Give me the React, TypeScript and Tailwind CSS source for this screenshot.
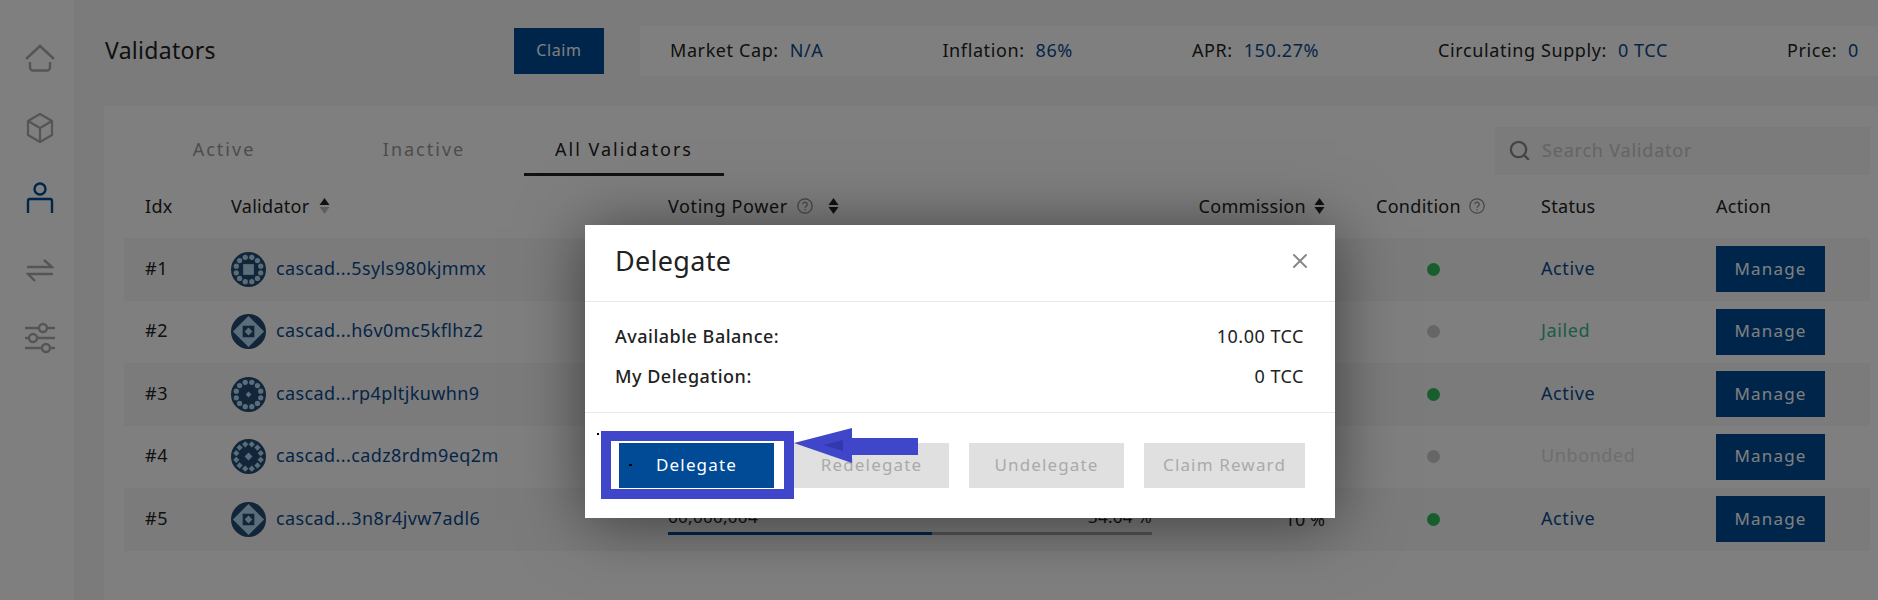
import { Search, X } from 'lucide-react';

// Validators page, with the Delegate modal open over it.

interface Validator {
  idx: number;
  name: string;
  avatar: number;
  status: string;
  statusClass: string;
  online: boolean;
  // only the last row's numbers stick out below the modal
  power?: string;
  share?: string;
  fill?: number;
  commission?: string;
}

const validators: Validator[] = [
  { idx: 1, name: 'cascad...5syls980kjmmx', avatar: 0, online: true, status: 'Active', statusClass: 'text-[#0b4a8f]' },
  { idx: 2, name: 'cascad...h6v0mc5kflhz2', avatar: 1, online: false, status: 'Jailed', statusClass: 'text-[#35b88c]' },
  { idx: 3, name: 'cascad...rp4pltjkuwhn9', avatar: 2, online: true, status: 'Active', statusClass: 'text-[#0b4a8f]' },
  { idx: 4, name: 'cascad...cadz8rdm9eq2m', avatar: 3, online: false, status: 'Unbonded', statusClass: 'text-[#dcdcdc]' },
  { idx: 5, name: 'cascad...3n8r4jvw7adl6', avatar: 1, online: true, status: 'Active', statusClass: 'text-[#0b4a8f]', power: '60,000,004', share: '34.64 %', fill: 54.5, commission: '10 %' },
];

const stats = [
  { label: 'Market Cap:', value: 'N/A' },
  { label: 'Inflation:', value: '86%' },
  { label: 'APR:', value: '150.27%' },
  { label: 'Circulating Supply:', value: '0 TCC' },
  { label: 'Price:', value: '0' },
];

const columns = 'grid grid-cols-[86px_437px_484px_173px_216px_175px_1fr] items-center';

function HomeIcon() {
  return (
    <svg width="32" height="30" viewBox="0 0 32 30" fill="none" stroke="#aaaaaa" strokeWidth="2.4">
      <path d="M2 15 16 2l14 13" />
      <path d="M6 18v5.5a3 3 0 0 0 3 3h14a3 3 0 0 0 3-3V18" />
    </svg>
  );
}

function CubeIcon() {
  return (
    <svg width="28" height="32" viewBox="0 0 28 32" fill="none" stroke="#aaaaaa" strokeWidth="2.2" strokeLinejoin="round">
      <path d="M14 2 26 9v14l-12 7-12-7V9z" />
      <path d="M2 9l12 7 12-7M14 16v14" />
    </svg>
  );
}

function PersonIcon() {
  return (
    <svg width="28" height="32" viewBox="0 0 28 32" fill="none" stroke="#004a96" strokeWidth="2.4">
      <circle cx="14" cy="7" r="5.5" />
      <path d="M2 31V19a2 2 0 0 1 2-2h20a2 2 0 0 1 2 2v12" />
    </svg>
  );
}

function SwapIcon() {
  return (
    <svg width="28" height="24" viewBox="0 0 28 24" fill="none" stroke="#aaaaaa" strokeWidth="2.4">
      <path d="M1 8h25L18 1" />
      <path d="M27 15H2l7 7" />
    </svg>
  );
}

function SlidersIcon() {
  return (
    <svg width="32" height="32" viewBox="0 0 32 32" fill="none" stroke="#aaaaaa" strokeWidth="2.4">
      <path d="M1 6h14M23 6h8M1 16h4M13 16h18M1 26h17M26 26h5" />
      <circle cx="19" cy="6" r="4" />
      <circle cx="9" cy="16" r="4" />
      <circle cx="22" cy="26" r="4" />
    </svg>
  );
}

function Avatar({ kind }: { kind: number }) {
  const ring = Array.from({ length: 12 }, (_, i) => {
    const a = (i * Math.PI) / 6 + Math.PI / 12;
    return { x: 18 + 13 * Math.cos(a), y: 18 + 13 * Math.sin(a) };
  });
  return (
    <svg width="35" height="35" viewBox="0 0 36 36" className="shrink-0">
      <circle cx="18" cy="18" r="18" fill="#264a72" />
      <g fill="#b5dcf5">
        {kind === 0 && (
          <>
            <rect x="12.5" y="12.5" width="11" height="11" />
            {ring.map((p, i) => (
              <circle key={i} cx={p.x} cy={p.y} r="2.7" />
            ))}
          </>
        )}
        {kind === 1 && (
          <>
            <path d="M18 2l10 10H8zM18 34L8 24h20zM2 18L12 8v20zM34 18L24 28V8z" />
            <path d="M18 14l4 4-4 4-4-4z" />
          </>
        )}
        {kind === 2 && (
          <>
            <path d="M18 15l3 3-3 3-3-3z" />
            {ring.map((p, i) => (
              <circle key={i} cx={p.x} cy={p.y} r="2.7" />
            ))}
          </>
        )}
        {kind === 3 && (
          <>
            <path d="M18 14l4 4-4 4-4-4z" />
            {ring.map((p, i) => (
              <path key={i} d={`M${p.x} ${p.y - 3.2}l3.2 3.2-3.2 3.2-3.2-3.2z`} />
            ))}
          </>
        )}
      </g>
    </svg>
  );
}

function SortIcon({ up = '#222222', down = '#222222' }: { up?: string; down?: string }) {
  return (
    <svg width="11" height="16" viewBox="0 0 11 16" className="shrink-0">
      <path d="M5.5 0l5 7H.5z" fill={up} />
      <path d="M5.5 16l5-7H.5z" fill={down} />
    </svg>
  );
}

function HelpIcon() {
  return (
    <svg width="16" height="16" viewBox="0 0 16 16" fill="none" stroke="#888888" strokeWidth="1.2" className="shrink-0">
      <circle cx="8" cy="8" r="7.2" />
      <path d="M5.8 6.3a2.2 2.2 0 1 1 3.3 1.9c-.7.4-1.1.8-1.1 1.6" />
      <path d="M8 11.2v1.2" />
    </svg>
  );
}

export default function App() {
  return (
    <div className="relative flex h-[600px] w-[1878px] overflow-hidden bg-[#f6f6f6] font-['Noto_Sans',sans-serif] text-[18px] text-[#222222]">
      {/* Sidebar */}
      <aside className="flex w-[74px] shrink-0 flex-col items-center bg-white pl-[6px] pt-[44px]">
        <div className="flex h-[30px] items-center justify-center"><HomeIcon /></div>
        <div className="mt-[38px] flex h-[32px] items-center justify-center"><CubeIcon /></div>
        <div className="mt-[38px] flex h-[32px] items-center justify-center"><PersonIcon /></div>
        <div className="mt-[45px] flex h-[24px] items-center justify-center"><SwapIcon /></div>
        <div className="mt-[39px] flex h-[32px] items-center justify-center"><SlidersIcon /></div>
      </aside>

      <main className="min-w-0 flex-1">
        {/* Top bar */}
        <header className="flex h-[106px] items-start pl-[31px] pt-[26px]">
          <h1 className="flex h-[50px] w-[409px] items-center pb-[2px] text-[23px] font-normal tracking-[0.3px]">Validators</h1>
          <button className="mt-[2px] h-[46px] w-[90px] bg-[#004a96] pb-[2px] text-[16px] tracking-[0.6px] text-white">Claim</button>
          <div className="ml-[36px] flex h-[50px] flex-1 items-center justify-between bg-white pb-[2px] pl-[30px] pr-[19px] text-[18px] tracking-[0.6px]">
            {stats.map(s => (
              <span key={s.label} className="flex gap-[11px]">
                <span>{s.label}</span>
                <span className="text-[#0b4a8f]">{s.value}</span>
              </span>
            ))}
          </div>
        </header>

        {/* Validators card */}
        <section className="ml-[30px] h-[494px] bg-white pl-[20px] pr-[8px] pt-[21px]">
          <div className="flex h-[49px] items-start justify-between">
            <div className="flex h-[49px] text-[18px] tracking-[2px]">
              <div className="flex h-[44px] w-[200px] items-center justify-center text-[#999999]">Active</div>
              <div className="flex h-[44px] w-[200px] items-center justify-center text-[#999999]">Inactive</div>
              <div className="flex h-[49px] w-[200px] items-center justify-center border-b-[3px] border-[#222222] pb-[2px]">All Validators</div>
            </div>
            <div className="flex h-[48px] w-[375px] items-center bg-[#f6f6f6] pb-[2px] pl-[13px] text-[#c8c8c8]">
              <Search size={23} strokeWidth={2.4} className="text-[#888888]" />
              <span className="ml-[11px] tracking-[0.8px]">Search Validator</span>
            </div>
          </div>

          {/* Table head */}
          <div className={`${columns} h-[62px] pb-[2px] pl-[21px] text-[18px] tracking-[0.3px]`}>
            <span>Idx</span>
            <span className="flex items-center gap-[9px]">Validator <SortIcon down="#bbbbbb" /></span>
            <span className="flex items-center gap-[9px] tracking-[0.6px]">Voting Power <HelpIcon /> <span className="ml-[6px] flex"><SortIcon /></span></span>
            <span className="flex items-center justify-end gap-[8px]">Commission <SortIcon /></span>
            <span className="flex items-center gap-[8px] pl-[51px]">Condition <HelpIcon /></span>
            <span>Status</span>
            <span>Action</span>
          </div>

          {/* Rows */}
          {validators.map((v, i) => (
            <div key={v.idx} className={`${columns} h-[62.5px] pl-[21px] ${i % 2 === 0 ? 'bg-[#f6f6f6]' : 'bg-white'}`}>
              <span className="pb-[2px] tracking-[0.7px]">#{v.idx}</span>
              <div className="flex items-center gap-[10px]">
                <Avatar kind={v.avatar} />
                <span className="pb-[2px] tracking-[0.4px] text-[#0b4a8f]">{v.name}</span>
              </div>
              <div>
                {v.power && (
                  <>
                    <div className="flex justify-between text-[17px] tracking-[0.3px]">
                      <span>{v.power}</span>
                      <span>{v.share}</span>
                    </div>
                    <div className="mt-[2px] h-[3px] bg-[#aaaaaa]">
                      <div className="h-full bg-[#004a96]" style={{ width: `${v.fill}%` }} />
                    </div>
                  </>
                )}
              </div>
              <span className="text-right">{v.commission}</span>
              <div className="pl-[102px]">
                <div className={`h-[13px] w-[13px] rounded-full ${v.online ? 'bg-[#2ebd59]' : 'bg-[#cccccc]'}`} />
              </div>
              <span className={`pb-[2px] tracking-[0.6px] ${v.statusClass}`}>{v.status}</span>
              <button className="h-[46px] w-[109px] bg-[#004a96] pb-[2px] text-[17px] tracking-[1.2px] text-white">Manage</button>
            </div>
          ))}
        </section>
      </main>

      {/* Modal backdrop */}
      <div className="absolute inset-0 bg-black/50" />

      {/* Delegate modal */}
      <div className="absolute left-[585px] top-[225px] h-[293px] w-[750px] bg-white shadow-[0_4px_60px_rgba(0,0,0,0.5)]">
        <div className="flex h-[77px] items-center justify-between border-b border-[#e8e8e8] pb-[4px] pl-[30px] pr-[23px]">
          <h2 className="text-[27px] font-normal tracking-[0.3px]">Delegate</h2>
          <X size={24} strokeWidth={2} className="text-[#888888]" />
        </div>
        <div className="flex h-[111px] flex-col justify-center gap-[16px] border-b border-[#e8e8e8] pb-[2px] pl-[30px] pr-[31px] tracking-[0.5px]">
          <div className="flex h-[24px] items-center justify-between">
            <span className="font-medium">Available Balance:</span>
            <span>10.00 TCC</span>
          </div>
          <div className="flex h-[24px] items-center justify-between">
            <span className="font-medium">My Delegation:</span>
            <span>0 TCC</span>
          </div>
        </div>
        <div className="flex gap-[20px] pl-[34px] pr-[30px] pt-[30px] text-[17px] tracking-[1.15px]">
          <button className="h-[45px] w-[155px] bg-[#004a96] pb-[2px] text-white">Delegate</button>
          <button className="h-[45px] w-[155px] bg-[#e0e0e0] pb-[2px] text-[#aaaaaa]">Redelegate</button>
          <button className="h-[45px] w-[155px] bg-[#e0e0e0] pb-[2px] text-[#aaaaaa]">Undelegate</button>
          <button className="h-[45px] flex-1 bg-[#e0e0e0] pb-[2px] text-[#aaaaaa]">Claim Reward</button>
        </div>
      </div>

      {/* Tutorial annotation drawn on the screenshot: box, arrow and stray dots */}
      <div className="absolute left-[601px] top-[431px] h-[68px] w-[193px] border-[10px] border-[#3f46c9]" />
      <svg width="130" height="40" viewBox="0 0 130 40" className="absolute left-[792px] top-[426px]">
        <path d="M2 17 60 2v10h66v17H60v8z" fill="#3f46c9" />
        <path d="M31 19l20-5v11z" fill="#3339ad" />
      </svg>
      <div className="absolute left-[597px] top-[433px] h-[2px] w-[2px] bg-black" />
      <div className="absolute left-[629px] top-[464px] h-[2px] w-[3px] bg-black" />
    </div>
  );
}
